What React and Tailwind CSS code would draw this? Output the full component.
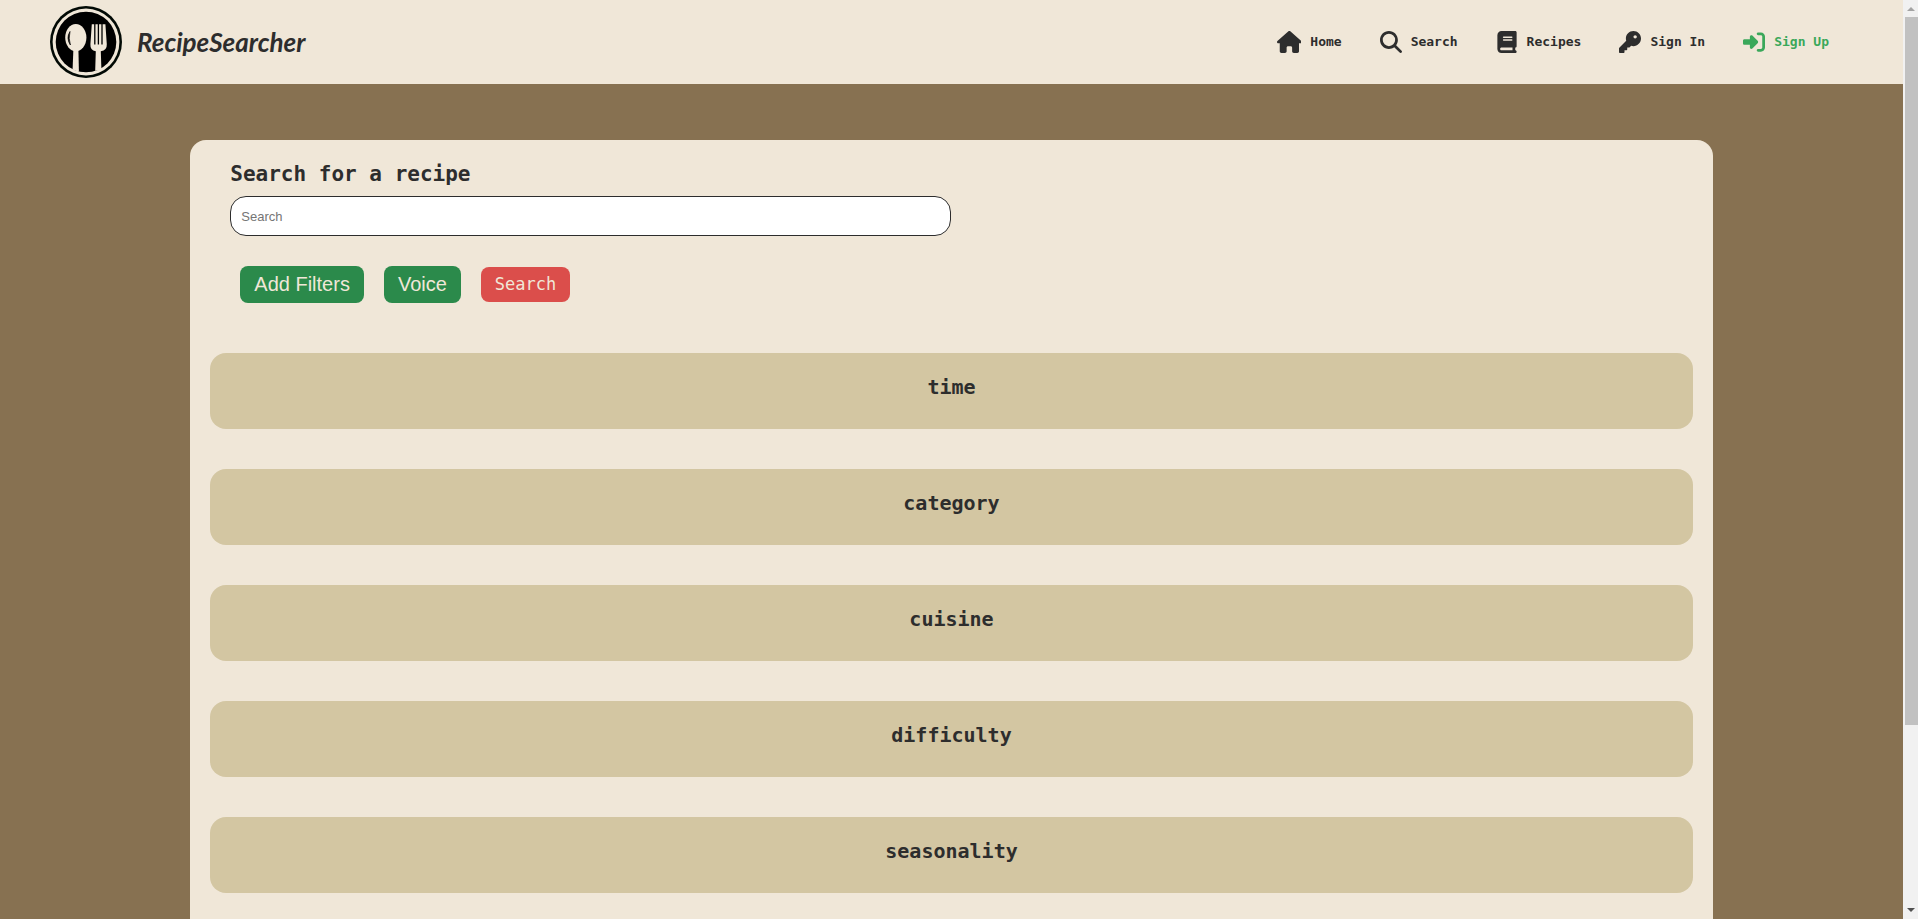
import { FaBook, FaKey, FaMagnifyingGlass, FaRightToBracket } from "react-icons/fa6";

function HouseIcon(props) {
  return (
    <svg viewBox="0 0 576 512" fill="currentColor" {...props}>
      <path d="M575.8 255.5c0 18-15 32.1-32 32.1h-32l.7 160.2c0 2.7-.2 5.4-.5 8.100V472c0 22.100-17.900 40-40 40H456c-1.100 0-2.200 0-3.300-.1c-1.400 .1-2.800 .1-4.200 .1H416 392c-22.100 0-40-17.900-40-40V448 384c0-17.700-14.300-32-32-32H256c-17.700 0-32 14.300-32 32v64 24c0 22.100-17.900 40-40 40H160 128.100c-1.500 0-3-.1-4.500-.2c-1.200 .1-2.400 .2-3.600 .2H104c-22.100 0-40-17.900-40-40V360c0-.9 0-1.900 .1-2.800V287.600H32c-18 0-32-14-32-32.100c0-9 3-17 10-24L266.400 8c7-7 15-8 22-8s15 2 21 7L564.800 231.500c8 7 12 15 11 24z" />
    </svg>
  );
}

const navItems = [
  { label: "Home", icon: HouseIcon, color: "text-[#2d2d2d]" },
  { label: "Search", icon: FaMagnifyingGlass, color: "text-[#2d2d2d]" },
  { label: "Recipes", icon: FaBook, color: "text-[#2d2d2d]" },
  { label: "Sign In", icon: FaKey, color: "text-[#2d2d2d]" },
  { label: "Sign Up", icon: FaRightToBracket, color: "text-[#3aa85a]" },
];

const filters = ["time", "category", "cuisine", "difficulty", "seasonality"];

function Logo() {
  return (
    <svg viewBox="0 0 72 72" className="size-18 shrink-0" aria-hidden="true">
      <circle cx="36" cy="36" r="36" fill="#020a05" />
      <circle cx="36" cy="36" r="33.4" fill="#f0e7d8" />
      <circle cx="36" cy="36" r="30.3" fill="#000" />
      <g fill="#f0e7d8">
        <ellipse cx="25.8" cy="31.6" rx="10.6" ry="13.6" />
        <path d="M23.4 43h5l.5 22.4q-3.400-.6-6.300-2z" />
        <path d="M41.800 18.200h13.600l1.400 20q.3 6.200-6 7l.6 18q-2.800 1.200-6.200 1.600l.6-19.600q-5.800-.8-5.400-7z" />
      </g>
      <path d="M20 25.500q-4.200 6.500 .4 13.500q-2.200-6.500-.4-13.500z" fill="#000" stroke="#000" strokeWidth="0.700" />
      <path d="M44.800 17.500v21M48.400 17.500v21M52 17.500v21" fill="none" stroke="#000" strokeWidth="1.300" />
    </svg>
  );
}

function Header() {
  return (
    <header className="flex h-21 shrink-0 items-center justify-between bg-[#f0e7d8] pr-[74px] pl-[50px]">
      <a href="#home" className="flex items-center gap-[15px]">
        <Logo />
        <span className="font-['Lato',sans-serif] text-[26px] leading-8 font-bold italic">RecipeSearcher</span>
      </a>
      <nav className="flex items-center gap-[38px]">
        {navItems.map(({ label, icon: Icon, color }) => (
          <a key={label} href="#" className={`flex items-center gap-[9px] text-[13px] font-bold ${color}`}>
            <Icon className="h-[22px] w-auto" aria-hidden="true" />
            {label}
          </a>
        ))}
      </nav>
    </header>
  );
}

function SearchForm() {
  return (
    <form className="flex flex-col px-5" onSubmit={(e) => e.preventDefault()}>
      <label htmlFor="recipe-search" className="text-[21px] leading-7 font-bold">
        Search for a recipe
      </label>
      <input
        id="recipe-search"
        type="text"
        placeholder="Search"
        className="mt-2 h-10 w-1/2 rounded-2xl border border-[#2d2d2d] bg-white px-[10px] font-['Liberation_Sans',sans-serif] text-[13px] placeholder:text-[#757575]"
      />
      <div className="mt-[30px] flex items-center gap-5 px-[10px] text-[#f0e7d8]">
        <button type="button" className="rounded-lg bg-[#2b8a4b] px-[14px] py-1 font-['Liberation_Sans',sans-serif] text-xl leading-[29px]">
          Add Filters
        </button>
        <button type="button" className="rounded-lg bg-[#2b8a4b] px-[14px] py-1 font-['Liberation_Sans',sans-serif] text-xl leading-[29px]">
          Voice
        </button>
        <button type="submit" className="rounded-lg bg-[#db4e4b] px-[14px] py-1 text-[17px] leading-[27px]">
          Search
        </button>
      </div>
    </form>
  );
}

function Scrollbar() {
  return (
    <div className="flex w-[15px] shrink-0 flex-col items-center bg-[#f1f1f1] py-[7px]" aria-hidden="true">
      <svg viewBox="0 0 8 4" className="h-1 w-2 shrink-0" fill="#a3a3a3">
        <path d="M4 0l4 4H0z" />
      </svg>
      <div className="my-[6px] w-full flex-1 pl-[2px]">
        <div className="h-4/5 bg-[#c1c1c1]" />
      </div>
      <svg viewBox="0 0 8 4" className="h-1 w-2 shrink-0" fill="#505050">
        <path d="M0 0h8l-4 4z" />
      </svg>
    </div>
  );
}

export default function App() {
  return (
    <div className="flex h-screen overflow-hidden bg-[#877151] font-['DejaVu_Sans_Mono',monospace] text-[#2d2d2d]">
      <div className="min-w-0 flex-1 overflow-hidden">
        <Header />
        <main className="mx-auto mt-14 flex min-h-screen w-4/5 flex-col gap-[50px] rounded-2xl bg-[#f0e7d8] px-5 pt-5 pb-10">
          <SearchForm />
          <div className="flex flex-col gap-10">
            {filters.map((name) => (
              <section key={name} className="rounded-2xl bg-[#d3c6a2] pt-5 pb-7">
                <h2 className="text-center text-xl leading-7 font-bold">{name}</h2>
              </section>
            ))}
          </div>
        </main>
      </div>
      <Scrollbar />
    </div>
  );
}
